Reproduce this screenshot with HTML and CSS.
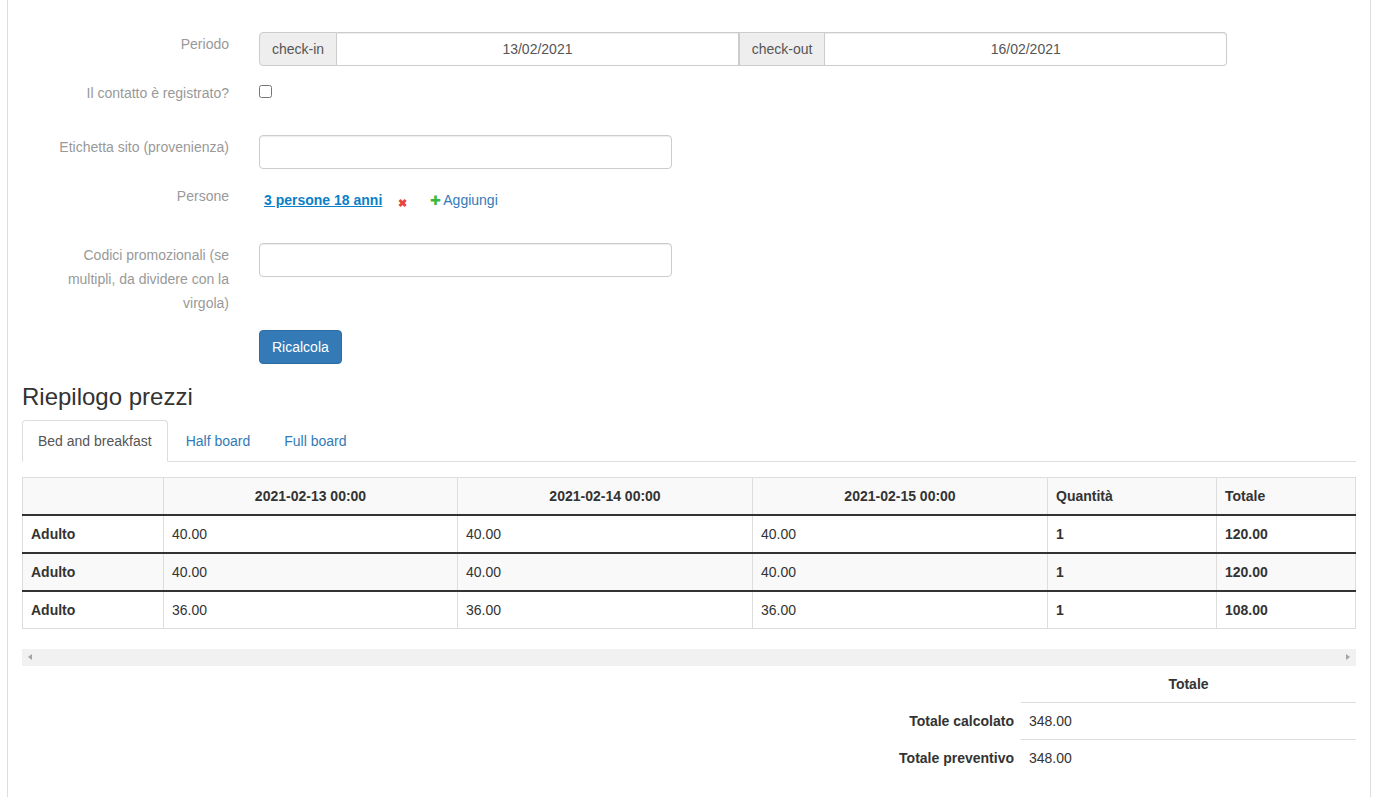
FILE: index.html
```html
<!DOCTYPE html>
<html lang="it">
<head>
    <meta charset="UTF-8">
    <meta name="viewport" content="width=device-width, initial-scale=1.0">
    <title>Preventivo</title>
    <link rel="stylesheet" href="styles.css">
</head>
<body>

<div class="panel">
    <form class="form-horizontal">
        <div class="form-row">
            <label class="form-label">Periodo</label>
            <div class="input-group">
                <span class="addon">check-in</span>
                <input type="text" class="group-input" value="13/02/2021">
                <span class="addon">check-out</span>
                <input type="text" class="group-input" value="16/02/2021">
            </div>
        </div>

        <div class="form-row row-check">
            <label class="form-label">Il contatto è registrato?</label>
            <div><input type="checkbox" class="check"></div>
        </div>

        <div class="form-row">
            <label class="form-label">Etichetta sito (provenienza)</label>
            <div><input type="text" class="form-control"></div>
        </div>

        <div class="form-row row-people">
            <label class="form-label">Persone</label>
            <div class="people">
                <a href="#" class="people-link">3 persone 18 anni</a>
                <span class="remove">&#10006;</span>
                <a href="#" class="add-link"><span class="plus">&#10010;</span>Aggiungi</a>
            </div>
        </div>

        <div class="form-row">
            <label class="form-label">Codici promozionali (se multipli, da dividere con la virgola)</label>
            <div><input type="text" class="form-control"></div>
        </div>

        <div class="form-row">
            <span></span>
            <div><button type="button" class="btn-primary">Ricalcola</button></div>
        </div>
    </form>

    <h3 class="section-title">Riepilogo prezzi</h3>

    <ul class="nav-tabs">
        <li class="active"><a href="#">Bed and breakfast</a></li>
        <li><a href="#">Half board</a></li>
        <li><a href="#">Full board</a></li>
    </ul>

    <div class="tab-content">
        <table class="price-table">
            <colgroup>
                <col style="width:141px">
                <col style="width:294px">
                <col style="width:295px">
                <col style="width:295px">
                <col style="width:169px">
                <col style="width:139px">
            </colgroup>
            <thead>
                <tr>
                    <th></th>
                    <th class="center">2021-02-13 00:00</th>
                    <th class="center">2021-02-14 00:00</th>
                    <th class="center">2021-02-15 00:00</th>
                    <th>Quantità</th>
                    <th>Totale</th>
                </tr>
            </thead>
            <tbody>
                <tr>
                    <th>Adulto</th>
                    <td>40.00</td><td>40.00</td><td>40.00</td>
                    <th>1</th><th>120.00</th>
                </tr>
                <tr class="striped">
                    <th>Adulto</th>
                    <td>40.00</td><td>40.00</td><td>40.00</td>
                    <th>1</th><th>120.00</th>
                </tr>
                <tr>
                    <th>Adulto</th>
                    <td>36.00</td><td>36.00</td><td>36.00</td>
                    <th>1</th><th>108.00</th>
                </tr>
            </tbody>
        </table>

        <div class="hscroll">
            <span class="arrow-left"></span>
            <span class="arrow-right"></span>
        </div>

        <div class="totals">
            <div class="t-label"></div>
            <div class="t-head">Totale</div>
            <div class="t-label">Totale calcolato</div>
            <div class="t-value">348.00</div>
            <div class="t-label">Totale preventivo</div>
            <div class="t-value">348.00</div>
        </div>
    </div>
</div>

</body>
</html>
```

FILE: styles.css
```css
* { box-sizing: border-box; }
body { margin: 0; font-family: "Liberation Sans", Arial, sans-serif; font-size: 14px; line-height: 20px; color: #333; background: #fff; }
.panel { margin: 0 6px 0 7px; padding: 32px 14px 0; border-left: 1px solid #ddd; border-right: 1px solid #ddd; min-height: 100vh; }

.form-horizontal { margin: 0; }
.form-row { display: grid; grid-template-columns: 207px 1fr; column-gap: 30px; margin-bottom: 15px; }
.form-label { padding-left: 27px; text-align: right; line-height: 24px; color: #999; }
.row-check { min-height: 39px; }
.row-people { min-height: 44px; }

.input-group { display: flex; width: 968px; height: 34px; }
.addon { padding: 6px 12px; background-color: #eee; border: 1px solid #ccc; color: #555; }
.addon + .group-input { border-left: none; }
.group-input { flex: 1; min-width: 0; border: 1px solid #ccc; border-left: none; padding: 6px 12px; font: inherit; color: #555; text-align: center; box-shadow: inset 0 1px 1px rgba(0,0,0,.075); }
.input-group .addon:first-child { border-radius: 4px 0 0 4px; }
.input-group .group-input:last-child { border-radius: 0 4px 4px 0; }

.check { margin: 4px 0 0; width: 13px; height: 13px; }

.form-control { display: block; width: 413px; height: 34px; padding: 6px 12px; font: inherit; color: #555; border: 1px solid #ccc; border-radius: 4px; box-shadow: inset 0 1px 1px rgba(0,0,0,.075); }

.people { display: flex; align-items: center; padding-top: 4px; height: 24px; margin-top: 2px; }
.people-link { margin-left: 5px; font-weight: bold; color: #0b7fc7; text-decoration: underline; }
.remove { margin-left: 16px; margin-top: 5px; color: #e8423b; font-size: 11px; font-weight: bold; }
.add-link { margin-left: 23px; color: #337ab7; text-decoration: none; }
.plus { color: #3cb83c; font-size: 13px; margin-right: 2px; }

.btn-primary { height: 34px; padding: 6px 12px; font: inherit; color: #fff; background-color: #337ab7; border: 1px solid #2e6da4; border-radius: 4px; cursor: pointer; }

.section-title { margin: 20px 0 10px; font-size: 24px; font-weight: normal; line-height: 26px; }

.nav-tabs { display: flex; list-style: none; margin: 0; padding: 0; border-bottom: 1px solid #ddd; }
.nav-tabs li { margin-right: 2px; margin-bottom: -1px; }
.nav-tabs a { display: block; padding: 10px 15px; border: 1px solid transparent; border-radius: 4px 4px 0 0; color: #337ab7; text-decoration: none; }
.nav-tabs .active a { color: #555; background: #fff; border-color: #ddd #ddd transparent; }

.tab-content { padding-top: 15px; }

.price-table { width: 100%; table-layout: fixed; border-collapse: collapse; border: 1px solid #ddd; }
.price-table th, .price-table td { padding: 8px; border: 1px solid #ddd; text-align: left; line-height: 20px; }
.price-table td { font-weight: normal; }
.price-table thead tr { background-color: #f9f9f9; }
.price-table thead th { border-bottom: 2px solid #333; }
.price-table th.center { text-align: center; }
.price-table tbody tr:not(:last-child) th, .price-table tbody tr:not(:last-child) td { border-bottom: 2px solid #333; }
.price-table .striped { background-color: #f9f9f9; }

.hscroll { position: relative; margin-top: 20px; height: 17px; background-color: #f1f1f1; }
.arrow-left, .arrow-right { position: absolute; top: 5px; width: 0; height: 0; border-top: 3.5px solid transparent; border-bottom: 3.5px solid transparent; }
.arrow-left { left: 6px; border-right: 4px solid #a3a3a3; }
.arrow-right { right: 6px; border-left: 4px solid #a3a3a3; }

.totals { display: grid; grid-template-columns: auto 335px; justify-content: end; }
.t-head { padding: 8px; text-align: center; font-weight: bold; }
.t-label { padding: 8px 7px 8px 8px; border-top: 1px solid transparent; text-align: right; font-weight: bold; }
.t-value { padding: 8px; border-top: 1px solid #ddd; }
```
